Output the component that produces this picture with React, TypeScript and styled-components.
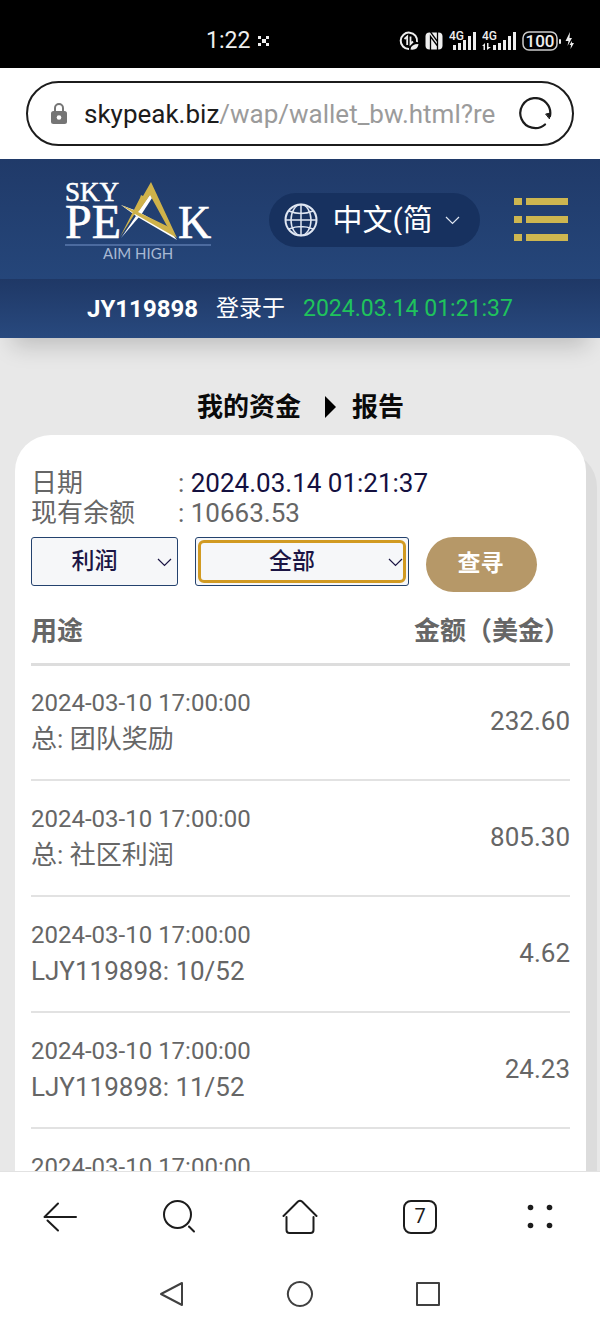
import React from 'react';
import styled, { createGlobalStyle } from 'styled-components';

const GlobalStyle = createGlobalStyle`
  * { box-sizing: border-box; }
  body {
    margin: 0;
    background: #fff;
    color: #666;
    font-family: Roboto, "Noto Sans CJK SC", sans-serif;
    font-size: 26px;
    line-height: 30px;
  }
  button, select, input { font: inherit; color: inherit; margin: 0; }
  svg { display: block; flex: none; }
`;

const Screen = styled.div`
  display: flex;
  flex-direction: column;
  height: 100vh;
`;

const StatusBar = styled.div`
  display: flex;
  align-items: center;
  justify-content: space-between;
  flex: none;
  height: 68px;
  padding: 14px 26px 0 206px;
  background: #000;
  color: #eee;
`;

const StatusGroup = styled.div`
  display: flex;
  align-items: center;
  gap: 8px;
  font-size: 23px;
`;

const StatusIcons = styled(StatusGroup)`
  gap: 6px;
`;

const AddressBar = styled.form`
  flex: none;
  height: 91px;
  padding: 13px 26px;
  background: #fff;
`;

const AddressField = styled.div`
  display: flex;
  align-items: center;
  height: 65px;
  padding: 0 20px 0 22px;
  border: 2px solid #1c1c1c;
  border-radius: 33px;
`;

const Url = styled.a`
  flex: 1;
  margin: 0 20px 0 16px;
  overflow: hidden;
  white-space: nowrap;
  color: #9b9b9b;
  text-decoration: none;
`;

const Host = styled.span`
  color: #1c1c1c;
`;

const IconButton = styled.button`
  display: flex;
  align-items: center;
  justify-content: center;
  padding: 0;
  border: 0;
  background: none;
`;

const SiteHeader = styled.header`
  position: relative;
  z-index: 1;
  flex: none;
  color: #fff;
  box-shadow: 0 20px 22px -12px rgba(0, 0, 0, 0.18);
`;

const Banner = styled.div`
  display: flex;
  align-items: center;
  justify-content: space-between;
  height: 120px;
  padding: 2px 32px 0 64px;
  background: linear-gradient(#203a69, #25467a);
`;

const LanguagePill = styled.label`
  display: flex;
  align-items: center;
  height: 54px;
  margin-left: 22px;
  padding: 0 20px 0 15px;
  border-radius: 27px;
  background: #17315f;
`;

const LanguageSelect = styled.select`
  width: 98px;
  height: 40px;
  margin: 0 14px 0 15px;
  padding: 0;
  border: 0;
  appearance: none;
  background: none;
  color: #fff;
  font-size: 30px;
`;

const LoginBar = styled.div`
  display: flex;
  align-items: center;
  justify-content: center;
  gap: 18px;
  height: 59px;
  background: linear-gradient(#1f3866, #28497e);
  font-size: 23px;
`;

const LoginName = styled.strong`
  font-size: 24px;
`;

const LoginTime = styled.time`
  color: #1fc35c;
`;

const Content = styled.main`
  flex: 1;
  min-height: 0;
  padding: 53px 14px 0 15px;
  overflow-y: auto;
  scrollbar-width: none;
  background: #e8e8e8;
`;

const Title = styled.h1`
  display: flex;
  align-items: center;
  justify-content: center;
  gap: 16px;
  margin: 0 0 12px;
  color: #0a0a0a;
  font-size: 26px;
  line-height: 32px;
  font-weight: 700;
`;

const TitleArrow = styled.svg`
  margin-left: 7px;
`;

const Card = styled.section`
  padding: 33px 16px 40px;
  border-radius: 36px;
  background: #fff;
  box-shadow: 11px 16px 0 #dcdcdc;
`;

const Summary = styled.dl`
  display: grid;
  grid-template-columns: 147px 1fr;
  margin: 0 0 9px;
`;

const Term = styled.dt``;

const Detail = styled.dd<{ $strong?: boolean }>`
  margin: 0;
  color: #666;

  span { color: ${(p) => (p.$strong ? '#14103f' : '#666')}; }
`;

const Filters = styled.form`
  display: flex;
  align-items: flex-start;
  gap: 17px;
`;

const SelectFrame = styled.label<{ $width: number }>`
  position: relative;
  flex: 0 1 ${(p) => p.$width}px;
  height: 49px;
  padding: 2px;
  border: 1px solid #24426e;
  border-radius: 3px;
  background: #f6f7f9;
`;

const FilterSelect = styled.select<{ $active?: boolean }>`
  width: 100%;
  height: 43px;
  padding: 0 20px 0 0;
  border: 3px solid ${(p) => (p.$active ? '#d19a22' : 'transparent')};
  border-radius: 6px;
  outline: 0;
  appearance: none;
  background: transparent;
  color: #1b1544;
  font-size: 23px;
  font-weight: 500;
  text-align-last: center;
`;

const FieldChevron = styled.svg`
  position: absolute;
  top: 20px;
  right: 5px;
  pointer-events: none;
`;

const SearchButton = styled.button`
  width: 111px;
  height: 55px;
  padding: 0 2px 1px 0;
  border: 0;
  border-radius: 28px;
  background: #b69868;
  color: #fff;
  font-size: 23px;
  font-weight: 700;
`;

const Report = styled.table`
  width: 100%;
  border-collapse: collapse;
`;

const HeadCell = styled.th<{ $end?: boolean }>`
  height: 72px;
  padding: 8px 0 0;
  border-bottom: 3px solid #ddd;
  text-align: ${(p) => (p.$end ? 'right' : 'left')};
  font-weight: 700;
`;

const Cell = styled.td`
  height: 116px;
  padding: 0 0 3px;
  border-bottom: 2px solid #e2e2e2;
`;

const AmountCell = styled(Cell)`
  text-align: right;
`;

const EntryDate = styled.time`
  display: block;
  font-size: 24px;
  line-height: 36px;
`;

const EntryLabel = styled.div`
  min-height: 36px;
  line-height: 36px;
`;

const Toolbar = styled.nav`
  display: grid;
  grid-template-columns: repeat(5, 1fr);
  flex: none;
  height: 91px;
  border-top: 1px solid #e2e2e2;
  background: #fff;
`;

const SystemNav = styled.nav`
  display: flex;
  justify-content: center;
  gap: 88px;
  flex: none;
  height: 64px;
  background: #fff;
`;

const SystemButton = styled(IconButton)`
  width: 40px;
`;

const Logo = () => (
  <svg width="148" height="84" viewBox="0 0 148 84" role="img" aria-label="Sky Peak, Aim High">
    <g fill="#fff" stroke="#fff" strokeWidth="0.6" fontFamily="Liberation Serif, serif">
      <text x="1" y="23" fontSize="27">SKY</text>
      <text x="1" y="60" fontSize="48">PE</text>
      <text x="114" y="60" fontSize="46">K</text>
    </g>
    <g fill="#fff">
      <path d="M87 15 L88 20 L77 37 L73 35 Z" />
      <path d="M57 60 L72 38 L75 39 Z" />
      <path d="M57 27 L72 38 L113 62 L104 50 L73 33 Z" />
    </g>
    <g fill="#cfb24a">
      <path d="M87 4 L113 60 L103 48 L86 17 L75 33 L70 37 L56 59 L76 20 L77 17 L79 18 Z" />
      <path d="M57 27 L74 34 L105 49 L113 60 L71 36 Z" />
    </g>
    <path d="M1 67 H147" stroke="#4c6b9f" strokeWidth="2" />
    <text x="39" y="81" fill="#a9b9d3" fontFamily="Lato, sans-serif" fontSize="15">AIM HIGH</text>
  </svg>
);

const GlobeIcon = () => (
  <svg width="34" height="34" viewBox="0 0 34 34" fill="none" stroke="#dfe6f2" strokeWidth="1.500" aria-hidden="true">
    <circle cx="17" cy="17" r="15.500" strokeWidth="2" />
    <ellipse cx="17" cy="17" rx="10" ry="15.500" />
    <path d="M17 1.500 V32.500 M1.500 17 H32.500 M5 8 Q17 13 29 8 M5 26 Q17 21 29 26" />
  </svg>
);

const ChevronPath = () => <path d="M1 1 L7.500 7.500 L14 1" />;

const Chevron = () => (
  <svg width="15" height="9" viewBox="0 0 15 9" fill="none" stroke="#dfe6f2" strokeWidth="1.200" aria-hidden="true">
    <ChevronPath />
  </svg>
);

const MenuIcon = () => (
  <svg width="54" height="44" viewBox="0 0 54 44" fill="#cdb650" aria-hidden="true">
    {[0, 18, 36].map((y) => (
      <React.Fragment key={y}>
        <rect x="0" y={y} width="8" height="7" />
        <rect x="12" y={y} width="42" height="7" />
      </React.Fragment>
    ))}
  </svg>
);

const LockIcon = () => (
  <svg width="18" height="24" viewBox="0 0 18 24" aria-hidden="true">
    <path d="M5 10 V6 a4 4 0 0 1 8 0 V10" fill="none" stroke="#757575" strokeWidth="2" />
    <rect x="1" y="9" width="16" height="13" rx="2.500" fill="#757575" />
    <circle cx="9" cy="15.500" r="2.300" fill="#fff" />
  </svg>
);

const ReloadIcon = () => (
  <svg width="34" height="34" viewBox="0 0 34 34" fill="none" stroke="#1c1c1c" strokeWidth="2.200" strokeLinecap="round">
    <path d="M32 19 A15 15 0 1 0 27 27.500" />
    <path d="M28 17 L32.500 16 L31.500 21.500 Z" fill="#1c1c1c" strokeWidth="1" />
  </svg>
);

const SparkIcon = () => (
  <svg width="12" height="12" viewBox="0 0 12 12" fill="#eee" aria-hidden="true">
    <path d="M0 1h3v3h-3z M8 1h3v3h-3z M4 4h4v4h-4z M0 8h3v3h-3z M8 8h3v3h-3z" />
  </svg>
);

const DataIcon = () => (
  <svg width="20" height="20" viewBox="0 0 20 20" fill="none" stroke="#eee" strokeWidth="2" aria-hidden="true">
    <path d="M18 11 A8.200 8.200 0 1 0 10 18" />
    <path d="M5.500 8 L8.200 5.500 V14 M11.500 5.500 V13 L14 10.500" strokeWidth="1.800" />
    <path d="M11.500 18.500 Q12 13 19.500 13 Q19 19.500 11.500 18.500 Z" fill="#eee" stroke="none" />
  </svg>
);

const NfcIcon = () => (
  <svg width="18" height="18" viewBox="0 0 18 18" fill="none" aria-hidden="true">
    <rect x="0.500" y="0.500" width="17" height="17" rx="4" fill="#eee" />
    <path d="M5.500 18 V4.500 L12.500 14 M5.500 0 L12.500 9.500 V18 M12.500 0 V13" stroke="#000" strokeWidth="1.300" />
  </svg>
);

const SignalIcon = ({ arrows }: { arrows?: boolean }) => (
  <svg width={arrows ? 34 : 27} height="20" viewBox={arrows ? '-7 0 34 20' : '0 0 27 20'} fill="#eee" aria-hidden="true">
    <text x={arrows ? -7 : 0} y="9" fontSize="12" fontWeight="500">4G</text>
    <rect x="4" y="14" width="3" height="5" />
    <rect x="9" y="12" width="3" height="7" />
    <rect x="14" y="9" width="3" height="10" />
    <rect x="19" y="5" width="3" height="14" />
    <rect x="24" y="1" width="3" height="18" />
    {arrows && <path d="M-7 15 L-4 12 V19 H-5.500 V15 Z M-2 12 V19 L2 16 H-0.500 V12 Z" />}
  </svg>
);

const BatteryIcon = () => (
  <svg width="52" height="20" viewBox="0 0 52 20" fill="#eee" aria-hidden="true">
    <rect x="1" y="1" width="34" height="18" rx="6" fill="none" stroke="#ccc" strokeWidth="1.500" />
    <text x="18" y="16" textAnchor="middle" fontSize="17" fontWeight="500">100</text>
    <rect x="37" y="8" width="2" height="5" rx="1" />
    <path d="M48 1 L43.500 10 H46.500 L45.500 15 L50 7 H47.500 Z M50 10 L47.500 14 H49 L48.500 18 L52 12 H50 Z" />
  </svg>
);

const BackIcon = () => (
  <svg width="36" height="36" viewBox="0 0 36 36">
    <path d="M34 18 H2.500 L16 4.500 M5.500 21.500 L16 31.500" />
  </svg>
);

const SearchIcon = () => (
  <svg width="36" height="36" viewBox="0 0 36 36">
    <circle cx="15.500" cy="15.500" r="13.500" />
    <path d="M27 27.500 L32 32.500" />
  </svg>
);

const HomeIcon = () => (
  <svg width="36" height="36" viewBox="0 0 36 36">
    <path d="M1.500 17 L16 2.500 Q18 1 20 2.500 L34.500 17 M4.500 18 V31 Q4.500 34 7.500 34 H28.500 Q31.500 34 31.500 31 V18" />
  </svg>
);

const TabsIcon = () => (
  <svg width="36" height="36" viewBox="0 0 36 36">
    <rect x="2" y="2" width="32" height="32" rx="7" />
    <text x="18" y="24" textAnchor="middle" fontSize="20" fill="#1c1c1c" stroke="none">7</text>
  </svg>
);

const MoreIcon = () => (
  <svg width="36" height="36" viewBox="0 0 36 36">
    <g fill="#1c1c1c" stroke="none">
      <circle cx="8.500" cy="8.500" r="2.800" />
      <circle cx="27.500" cy="8.500" r="2.800" />
      <circle cx="8.500" cy="26.500" r="2.800" />
      <circle cx="27.500" cy="26.500" r="2.800" />
    </g>
  </svg>
);

const ToolbarButton = styled(IconButton)`
  svg {
    fill: none;
    stroke: #1c1c1c;
    stroke-width: 2;
    stroke-linecap: round;
    stroke-linejoin: round;
  }
`;

const FilterChevron = () => (
  <FieldChevron width="15" height="9" viewBox="0 0 15 9" fill="none" stroke="#1b1544" strokeWidth="1.200" aria-hidden="true">
    <ChevronPath />
  </FieldChevron>
);

const tools = [
  { name: '返回', Icon: BackIcon },
  { name: '搜索', Icon: SearchIcon },
  { name: '主页', Icon: HomeIcon },
  { name: '标签页', Icon: TabsIcon },
  { name: '更多', Icon: MoreIcon },
];

const systemKeys = [
  { name: '后退', path: 'M24 3 V25 L3 14 Z' },
  { name: '桌面', path: 'M14 2 A12 12 0 1 1 13.900 2 Z' },
  { name: '最近任务', path: 'M3 3 H25 V25 H3 Z' },
];

const entries = [
  { date: '2024-03-10 17:00:00', label: '总: 团队奖励', amount: '232.60' },
  { date: '2024-03-10 17:00:00', label: '总: 社区利润', amount: '805.30' },
  { date: '2024-03-10 17:00:00', label: 'LJY119898: 10/52', amount: '4.62' },
  { date: '2024-03-10 17:00:00', label: 'LJY119898: 11/52', amount: '24.23' },
  { date: '2024-03-10 17:00:00', label: '', amount: '' },
];

export default function App() {
  return (
    <Screen>
      <GlobalStyle />
      <StatusBar>
        <StatusGroup>
          <span>1:22</span>
          <SparkIcon />
        </StatusGroup>
        <StatusIcons>
          <DataIcon />
          <NfcIcon />
          <SignalIcon />
          <SignalIcon arrows />
          <BatteryIcon />
        </StatusIcons>
      </StatusBar>

      <AddressBar>
        <AddressField>
          <LockIcon />
          <Url href="#"><Host>skypeak.biz</Host>/wap/wallet_bw.html?re</Url>
          <IconButton type="button" aria-label="刷新"><ReloadIcon /></IconButton>
        </AddressField>
      </AddressBar>

      <SiteHeader>
        <Banner>
          <Logo />
          <LanguagePill>
            <GlobeIcon />
            <LanguageSelect aria-label="语言" defaultValue="zh">
              <option value="zh">中文(简体)</option>
              <option value="en">English</option>
            </LanguageSelect>
            <Chevron />
          </LanguagePill>
          <IconButton type="button" aria-label="菜单"><MenuIcon /></IconButton>
        </Banner>
        <LoginBar>
          <LoginName>JY119898</LoginName>
          <span>登录于</span>
          <LoginTime>2024.03.14 01:21:37</LoginTime>
        </LoginBar>
      </SiteHeader>

      <Content>
        <Title>
          我的资金
          <TitleArrow width="12" height="24" viewBox="0 0 12 24" aria-hidden="true">
            <path d="M1 1 L12 12 L1 23 Z" fill="#000" />
          </TitleArrow>
          报告
        </Title>
        <Card>
          <Summary>
            <Term>日期</Term>
            <Detail $strong>: <span>2024.03.14 01:21:37</span></Detail>
            <Term>现有余额</Term>
            <Detail>: <span>10663.53</span></Detail>
          </Summary>
          <Filters>
            <SelectFrame $width={147}>
              <FilterSelect aria-label="类型">
                <option>利润</option>
              </FilterSelect>
              <FilterChevron />
            </SelectFrame>
            <SelectFrame $width={214}>
              <FilterSelect $active aria-label="范围">
                <option>全部</option>
              </FilterSelect>
              <FilterChevron />
            </SelectFrame>
            <SearchButton type="button">查寻</SearchButton>
          </Filters>
          <Report>
            <thead>
              <tr>
                <HeadCell>用途</HeadCell>
                <HeadCell $end>金额（美金）</HeadCell>
              </tr>
            </thead>
            <tbody>
              {entries.map((entry, i) => (
                <tr key={i}>
                  <Cell>
                    <EntryDate>{entry.date}</EntryDate>
                    <EntryLabel>{entry.label}</EntryLabel>
                  </Cell>
                  <AmountCell>{entry.amount}</AmountCell>
                </tr>
              ))}
            </tbody>
          </Report>
        </Card>
      </Content>

      <Toolbar aria-label="浏览器">
        {tools.map(({ name, Icon }) => (
          <ToolbarButton key={name} type="button" aria-label={name}><Icon /></ToolbarButton>
        ))}
      </Toolbar>
      <SystemNav aria-label="系统">
        {systemKeys.map(({ name, path }) => (
          <SystemButton key={name} type="button" aria-label={name}>
            <svg width="28" height="28" viewBox="0 0 28 28" fill="none" stroke="#404040" strokeWidth="2" strokeLinejoin="round">
              <path d={path} />
            </svg>
          </SystemButton>
        ))}
      </SystemNav>
    </Screen>
  );
}
